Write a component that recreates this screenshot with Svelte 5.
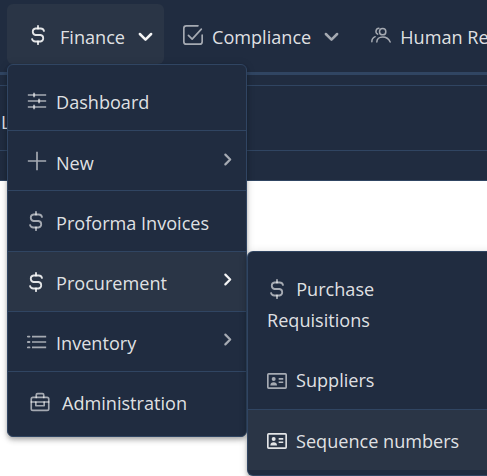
<script>
  const nav = [
    { icon: 'dollar', label: 'Finance', open: true },
    { icon: 'check', label: 'Compliance' },
    { icon: 'users', label: 'Human Resources' }
  ];
  const mainItems = [
    { icon: 'sliders', label: 'Dashboard' },
    { icon: 'plus', label: 'New', sub: true },
    { icon: 'dollar', label: 'Proforma Invoices' },
    { icon: 'dollar', label: 'Procurement', sub: true, active: true },
    { icon: 'list', label: 'Inventory', sub: true },
    { icon: 'case', label: 'Administration' }
  ];
  const subItems = [
    { icon: 'dollar', label: 'Purchase Requisitions', wrap: true },
    { icon: 'card', label: 'Suppliers' },
    { icon: 'card', label: 'Sequence numbers', active: true }
  ];
</script>

{#snippet icon(name)}
  <svg class="ic ic-{name}" viewBox="0 0 24 24" fill="none" stroke="currentColor" stroke-width="2" stroke-linecap="round" stroke-linejoin="round" aria-hidden="true">
    {#if name === 'dollar'}
      <path d="M18 8a3.500 3.500 0 0 0-3.200-2.500H9.500a3.300 3.300 0 0 0 0 6.500h5a3.300 3.300 0 0 1 0 6.500H9.200A3.500 3.500 0 0 1 6 16" stroke-width="1.800" /><path d="M12 2.800v2.700M12 18.500v2.700" stroke-width="1.800" />
    {:else if name === 'check'}
      <path d="M6.500 12.500l4.500 4.500 11-12" /><path d="M23 12v8a3 3 0 0 1-3 3H4a3 3 0 0 1-3-3V4a3 3 0 0 1 3-3h14" />
    {:else if name === 'users'}
      <circle cx="14" cy="8" r="3.800" stroke-width="1.800" /><path d="M7 20.400c0-3.500 3-6 7-6s7.500 2.500 9 6" stroke-width="1.800" /><path d="M9.500 4a3.700 3.700 0 0 0-1.500 7M1 20c0-3 1.500-5 4-6" stroke-width="1.800" />
    {:else if name === 'sliders'}
      <path d="M1 4.800h22M1 12h22M1 19.200h22" stroke-linecap="butt" /><path d="M8.500 2v5.500M14.500 9.300v5.500M8.500 16.500V22" stroke-width="2.400" stroke-linecap="butt" />
    {:else if name === 'plus'}
      <path d="M12 1v22M1 12h22" stroke-linecap="butt" />
    {:else if name === 'list'}
      <path d="M6 5.500h17M6 12h17M6 18.500h17" stroke-linecap="butt" /><path d="M1 5.500h2M1 12h2M1 18.500h2" stroke-width="2.200" />
    {:else if name === 'case'}
      <rect x="1.500" y="6.500" width="21" height="15.500" rx="2" /><path d="M7.500 6.500V3.500a1.500 1.500 0 0 1 1.500-1.500h6a1.500 1.500 0 0 1 1.500 1.500v3" /><path d="M1.500 12h21" /><path d="M7 12v4.500h10V12" />
    {:else if name === 'card'}
      <rect x="1" y="3.500" width="22" height="17" rx="1" /><circle cx="8" cy="9.700" r="2.400" fill="currentColor" stroke="none" /><path d="M4 17.500c0-2.700 1.700-3.900 4-3.900s4 1.200 4 3.900z" fill="currentColor" stroke="none" /><path d="M14 9.500h5.500M14 13.500h5.500" stroke-linecap="butt" />
    {/if}
  </svg>
{/snippet}

{#snippet chevron(cls)}
  <svg class={cls} viewBox="0 0 12 12" fill="none" stroke="currentColor" stroke-width="2" stroke-linecap="round" stroke-linejoin="round" aria-hidden="true">
    <path d="M1.500 4l4.500 4.500L10.500 4" />
  </svg>
{/snippet}

<div class="page">
  <header class="bar">
    <nav class="nav">
      {#each nav as item}
        <div class="nav-item" class:open={item.open}>
          <span class="nav-icon">{@render icon(item.icon)}</span>
          <span class="nav-label">{item.label}</span>
          {#if !item.label.startsWith('Human')}{@render chevron('nav-chev')}{/if}
        </div>
      {/each}
    </nav>
  </header>

  <div class="sub-strip"></div>
  <div class="row-l"><span>Li</span></div>
  <div class="strip-bottom"></div>

  <div class="menu main">
    {#each mainItems as item}
      <div class="item" class:active={item.active}>
        <span class="item-icon item-{item.icon}">{@render icon(item.icon)}</span>
        <span class="item-label">{item.label}</span>
        {#if item.sub}{@render chevron('sub-chev')}{/if}
      </div>
    {/each}
  </div>

  <div class="menu side">
    {#each subItems as item}
      <div class="item" class:active={item.active} class:wrap={item.wrap}>
        <span class="item-icon item-{item.icon}">{@render icon(item.icon)}</span>
        <span class="item-label">{item.label}</span>
      </div>
    {/each}
  </div>
</div>

<style>
  :global(body) {
    margin: 0;
    background: #fff;
  }
  .page {
    position: relative;
    width: 487px;
    height: 476px;
    overflow: hidden;
    font-family: "Open Sans", "Noto Sans", sans-serif;
    font-size: 18.1px;
    color: rgba(255, 255, 255, 0.87);
  }
  .bar {
    height: 72px;
    background: #202c40;
    border-bottom: 3px solid #304562;
  }
  .nav {
    display: flex;
    align-items: flex-start;
    padding: 4px 0 0 7px;
    white-space: nowrap;
  }
  .nav-item {
    flex: none;
    display: flex;
    align-items: center;
    height: 56px;
    padding: 4px 0 0 19px;
    border-radius: 6px;
  }
  .nav-item.open {
    background: #2a3546;
    padding-left: 20px;
    width: 157px;
    box-sizing: border-box;
    height: 60px;
  }
  .nav-label {
    margin-top: 2px;
  }
  .nav-icon {
    display: flex;
    color: rgba(255, 255, 255, 0.6);
    margin-right: 9px;
    margin-top: -2px;
  }
  .open .nav-icon {
    color: rgba(255, 255, 255, 0.87);
    margin-right: 10px;
    margin-left: -1px;
  }
  .nav-chev {
    width: 15px;
    height: 15px;
    margin-left: 13px;
    margin-right: 13px;
    color: rgba(255, 255, 255, 0.6);
  }
  .open .nav-chev {
    color: rgba(255, 255, 255, 0.95);
    margin-right: 0;
  }
  .ic {
    width: 20px;
    height: 20px;
    flex: none;
    display: block;
  }
  .ic-dollar {
    width: 24px;
    height: 24px;
    margin: -2px 0;
  }
  .sub-strip {
    height: 10px;
    background: #202c40;
    border-bottom: 1px solid #304562;
  }
  .row-l {
    height: 65px;
    background: #202c40;
    border-bottom: 1px solid #304562;
    display: flex;
    align-items: center;
    padding: 7px 0 0 1px;
    box-sizing: border-box;
  }
  .strip-bottom {
    height: 29px;
    background: #202c40;
    border-bottom: 1px solid #304562;
  }
  .menu {
    position: absolute;
    background: #202c40;
    border: 1px solid #304562;
    border-radius: 6px;
    box-shadow: 0 2px 4px -1px rgba(0, 0, 0, 0.2), 0 4px 5px rgba(0, 0, 0, 0.14), 0 1px 10px rgba(0, 0, 0, 0.12);
  }
  .main {
    left: 7px;
    top: 64px;
    width: 238px;
    padding: 6px 0 4.7px;
  }
  .side {
    left: 247px;
    top: 251px;
    width: 260px;
    border-right: none;
    padding: 5px 0;
  }
  .item {
    position: relative;
    display: flex;
    align-items: center;
    height: 59.19px;
    padding: 0 19px;
    border-bottom: 1px solid #304562;
  }
  .item:last-child {
    border-bottom: none;
  }
  .item.active {
    background: #2a3546;
  }
  .item-icon {
    display: inline-flex;
    color: rgba(255, 255, 255, 0.6);
    margin-right: 9px;
    margin-top: 1px;
  }
  .item-label {
    margin-top: 3.8px;
  }
  .item.active .item-icon {
    color: rgba(255, 255, 255, 0.87);
  }
  .item-case {
    margin-left: 3px;
    margin-right: 12px;
  }
  .item-dollar {
    margin-left: -3px;
    margin-right: 8px;
  }
  .side .item {
    height: 59px;
  }
  .side .item:last-child {
    height: 60px;
  }
  .side .item-icon {
    margin-top: 2px;
  }
  .side .item-label {
    margin-top: 1.5px;
  }
  .side .item.wrap {
    display: block;
    height: auto;
    width: 202px;
    box-sizing: border-box;
    padding: 17px 0 14px 19px;
    line-height: 31px;
    border-bottom: none;
  }
  .side .wrap .item-icon {
    vertical-align: -5px;
    margin: 0 2.5px 0 -2px;
  }
  .side .wrap .item-label {
    margin-top: 0;
  }
  .sub-chev {
    position: absolute;
    right: 12px;
    top: 21.5px;
    width: 13px;
    height: 13px;
    transform: rotate(-90deg);
    color: rgba(255, 255, 255, 0.6);
  }
  .item.active .sub-chev {
    color: rgba(255, 255, 255, 0.95);
  }
</style>
